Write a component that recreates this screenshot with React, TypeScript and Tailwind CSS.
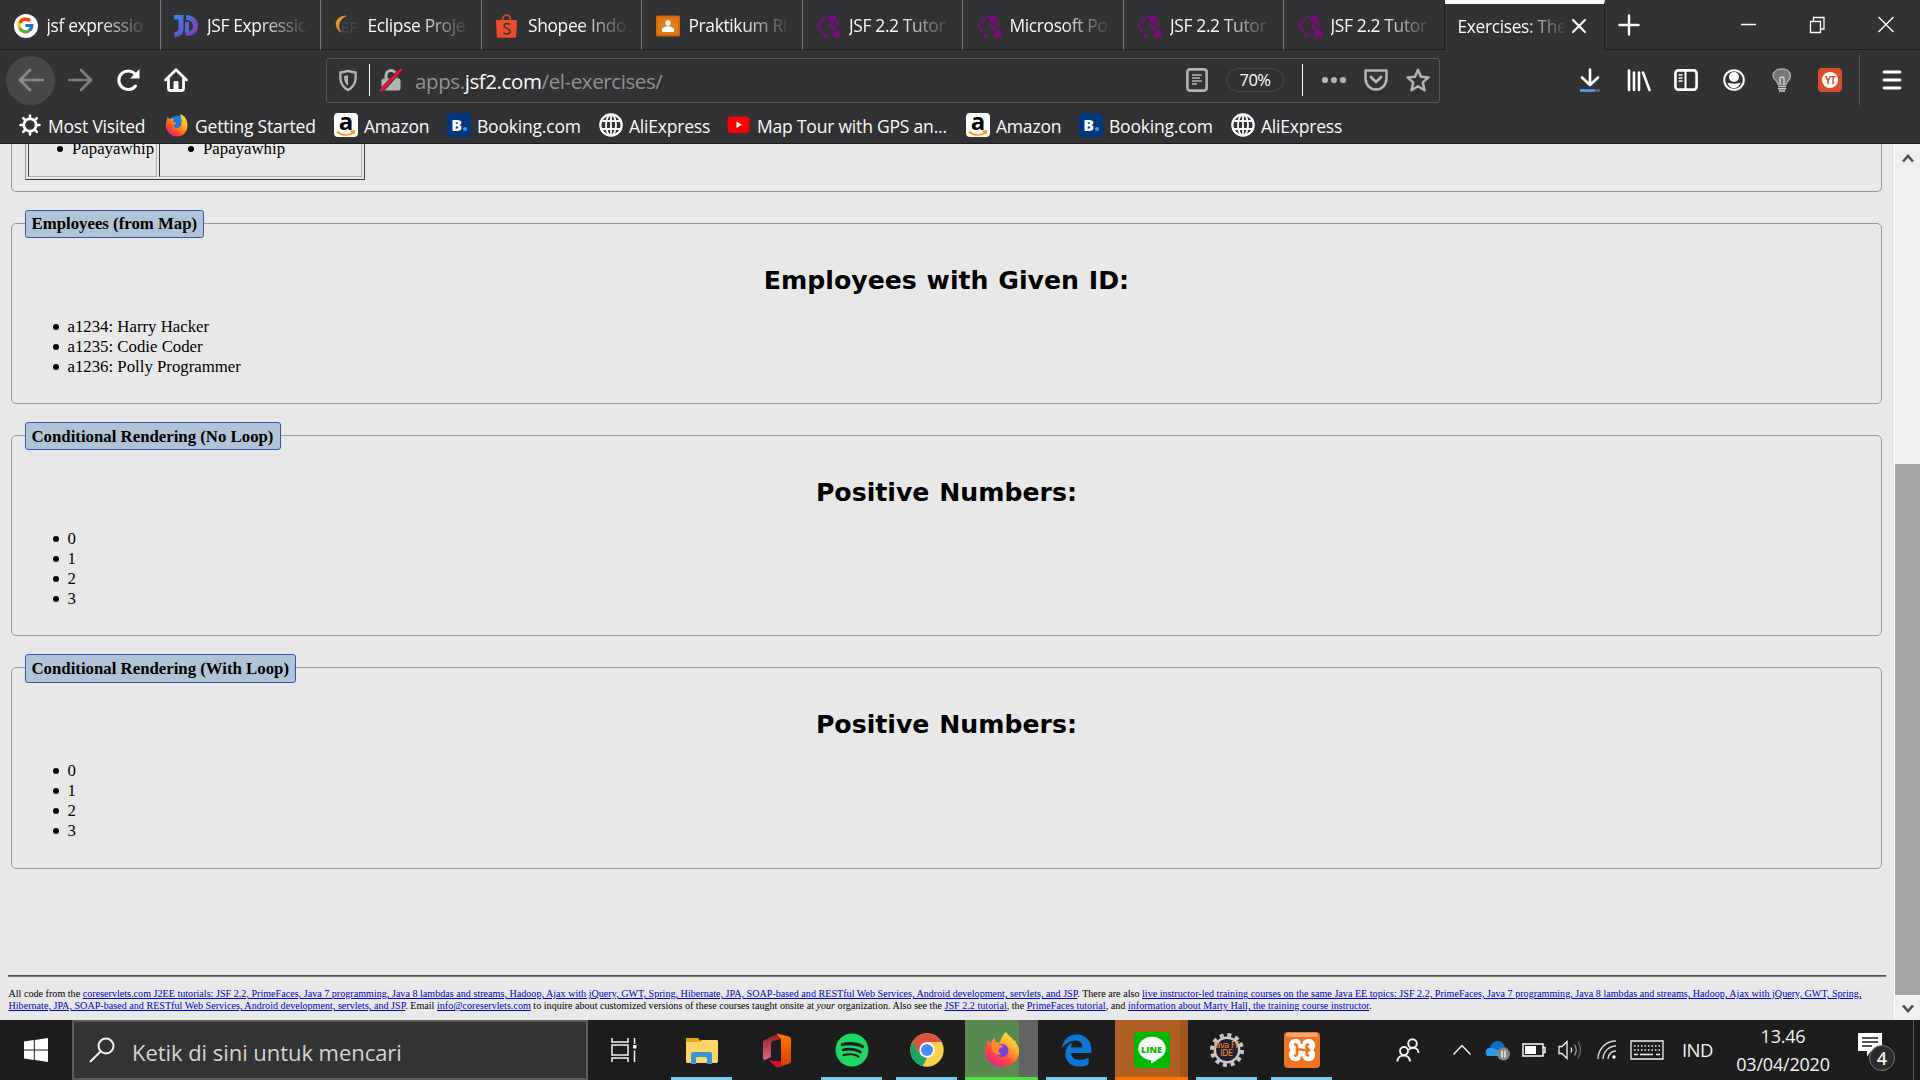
import React from "react";
import { FcGoogle } from "react-icons/fc";
import { FaSpotify, FaEdgeLegacy } from "react-icons/fa";

const UI = "font-['Open_Sans',sans-serif]";

/* ---------- favicons ---------- */

const GoogleIcon = () => (
  <span className="flex size-6 shrink-0 items-center justify-center rounded-full bg-white">
    <FcGoogle className="size-[19px]" />
  </span>
);

const JournalDevIcon = () => (
  <svg viewBox="0 0 24 24" className="size-6 shrink-0">
    <defs>
      <linearGradient id="jd" x1="0" y1="0" x2="1" y2="1">
        <stop offset="0" stopColor="#2f8fe8" />
        <stop offset="0.5" stopColor="#5b5fd0" />
        <stop offset="1" stopColor="#9a2bb0" />
      </linearGradient>
    </defs>
    <path
      fill="url(#jd)"
      d="M0 1h9.500v14c0 5-3.500 8-9 8v-5c3 0 4-1.300 4-3.500V5.500H0zM12 1c7 0 12 4 12 11s-5 10-12 10l-1-4.500c5 0 8-1.500 8-5.500s-3-6-7-6z"
    />
    <path fill="#5064d4" d="M11 8h4v10h-4z" />
  </svg>
);

const EclipseIcon = () => (
  <svg viewBox="0 0 24 24" className="size-6 shrink-0">
    <path d="M11 2C3.500 2 .5 7 1.200 11c.4 3 2 5.500 4.500 7C3 14 2.500 6 11 2z" fill="#e8962a" stroke="#e8962a" strokeWidth="0.600" />
    <path d="M13.500 9H7.500v9h6M7.500 13.500H13M22.500 9h-6v9.500M16.500 13.500h5.500" fill="none" stroke="#47464c" strokeWidth="1.300" />
  </svg>
);

const ShopeeIcon = () => (
  <svg viewBox="0 0 24 24" className="size-6 shrink-0">
    <path d="M7.500 7c0-4 2-6 4-6s4 2 4 6" fill="none" stroke="#ee4d2d" strokeWidth="1.500" />
    <path d="M1 6h21l-.8 16.500q-.2 1.200-1.500 1.200H3.500Q2 23.700 1.900 22.500z" fill="#ee4d2d" />
    <path d="M15 10.500c-2.500-1.800-6-1.300-6 1.300 0 3 6 2.200 6 5.600 0 3-4 3.500-6.500 1.300" fill="none" stroke="#33302f" strokeWidth="1.500" />
  </svg>
);

const ClassroomIcon = () => (
  <svg viewBox="0 0 24 24" className="size-6 shrink-0">
    <rect x="0" y="1.500" width="24" height="21" rx="1.500" fill="#cf6a0c" />
    <rect x="2" y="3.500" width="20" height="17" fill="#de7d15" />
    <circle cx="12" cy="9" r="2.700" fill="#fff" />
    <path d="M6 18v-2c0-5 12-5 12 0v2z" fill="#fff" />
  </svg>
);

const CoreServletsIcon = () => (
  <svg viewBox="0 0 24 24" className="size-6 shrink-0" fill="none" stroke="#7b0c80" strokeWidth="1.800">
    <path d="M14 1.500 8 4 1.200 12 9 22.500l2.500-2.500" />
    <path d="M20 7l2.500 2.500M22.500 9.500l-6 7M13 12.500l4.500 2" />
    <rect x="13" y="1" width="6.500" height="6.500" rx="1.500" fill="#7b0c80" stroke="none" />
    <rect x="17" y="16.500" width="7" height="7" rx="1.200" fill="#7b0c80" stroke="none" />
    <path d="M12.500 14l5-5.500" strokeWidth="2.400" />
  </svg>
);

const GearIcon = () => (
  <svg viewBox="0 0 24 24" className="size-6 shrink-0">
    <g fill="none" stroke="#fff">
      <circle cx="12" cy="12" r="6.200" strokeWidth="2.800" />
      <g strokeWidth="2.600" strokeLinecap="round">
        <path d="M12 5V2.500M12 21.500V19M5 12H2.500M21.500 12H19M7 7 5.200 5.200M17 7l1.800-1.800M7 17l-1.800 1.800M17 17l1.800 1.800" />
      </g>
    </g>
  </svg>
);

const FirefoxOldIcon = () => (
  <svg viewBox="0 0 24 24" className="size-6 shrink-0">
    <defs>
      <linearGradient id="fo" x1="1" y1="0" x2="0.200" y2="1">
        <stop offset="0" stopColor="#fff04a" />
        <stop offset="0.400" stopColor="#ffb01f" />
        <stop offset="0.700" stopColor="#ff5a1f" />
        <stop offset="1" stopColor="#e31587" />
      </linearGradient>
    </defs>
    <circle cx="12" cy="12" r="9.500" fill="#2277e0" />
    <path
      fill="url(#fo)"
      d="M2.500 4 5 6.500C6 5 8 5.500 9 5.500 8 7 8 8 8.500 9l3 .7c-.2 1.500-2.500 1.600-2.800 2.500C9 15 12 16 14.500 14c2-1 2.500-4 1-6.500 1 .3 1.800 1 2 2-.2-3.500-2.500-5-2-8.500 4 1.500 7 6 7 11.500 0 6.500-4.500 11-10.500 11S.8 18.500.8 12.500C.8 9 2 6 2.500 4z"
    />
  </svg>
);

const AmazonIcon = () => (
  <span className="relative flex h-6 w-6 shrink-0 justify-center rounded-[4px] bg-white">
    <span className="-mt-[9px] h-[33px] font-['Open_Sans',sans-serif] text-[24px] leading-[33px] font-bold tracking-normal text-black">a</span>
    <svg viewBox="0 0 24 24" className="absolute inset-0 size-6" fill="none" stroke="#f59b18" strokeWidth="1.700">
      <path d="M3 18.500c5 4.500 12 4.500 16.500 1M16.500 18.300l4-.2-.9 3.300" />
    </svg>
  </span>
);

const BookingIcon = () => (
  <span className="flex size-6 shrink-0 items-center justify-center gap-px rounded-[4px] bg-[#003580] font-['Open_Sans',sans-serif] text-[16px] leading-none font-extrabold text-white">
    <span>B</span>
    <span className="mt-2 size-[4px] rounded-full bg-[#2aa8e8]" />
  </span>
);

const GlobeIcon = () => (
  <svg viewBox="0 0 24 24" className="size-6 shrink-0" fill="none" stroke="#fff" strokeWidth="1.800">
    <circle cx="12" cy="12" r="10.700" strokeWidth="2.200" />
    <ellipse cx="12" cy="12" rx="5" ry="10.500" />
    <path d="M12 1v22M2.500 8h19M2.500 16h19" />
  </svg>
);

const YouTubeIcon = () => (
  <svg viewBox="0 0 24 24" className="size-6 shrink-0">
    <rect x="0.500" y="3.500" width="22" height="16.500" rx="4" fill="#f00" />
    <path d="M9.500 8.500v6.500l5.500-3.200z" fill="#fff" />
  </svg>
);

/* ---------- browser chrome ---------- */

const tabs = [
  { title: "jsf expressio", icon: <GoogleIcon /> },
  { title: "JSF Expressic", icon: <JournalDevIcon /> },
  { title: "Eclipse Proje", icon: <EclipseIcon /> },
  { title: "Shopee Indo", icon: <ShopeeIcon /> },
  { title: "Praktikum RI", icon: <ClassroomIcon /> },
  { title: "JSF 2.2 Tutor", icon: <CoreServletsIcon /> },
  { title: "Microsoft Po", icon: <CoreServletsIcon /> },
  { title: "JSF 2.2 Tutor", icon: <CoreServletsIcon /> },
  { title: "JSF 2.2 Tutor", icon: <CoreServletsIcon /> },
];

const TabBar = () => (
  <div className="flex h-[50px] text-[17.400px] tracking-[-0.350px]">
    {tabs.map((t, i) => (
      <div
        key={i}
        className={
          "flex w-[160.500px] shrink-0 items-center gap-[9px] border-b border-b-[#1e1e1e] pt-[2px] pl-[13.500px] " +
          (i < 8 ? "border-r border-r-[#777]" : "border-r border-r-[#1e1e1e]")
        }
      >
        {t.icon}
        <span className="w-[102px] overflow-hidden whitespace-nowrap [mask-image:linear-gradient(to_right,#000_50%,transparent_100%)]">
          {t.title}
        </span>
      </div>
    ))}
    <div className="flex w-[160px] shrink-0 items-center border-t-4 border-r border-t-[#fafafa] border-r-[#1e1e1e] pl-[13px]">
      <span className="-mt-[2px] w-[107px] overflow-hidden whitespace-nowrap [mask-image:linear-gradient(to_right,#000_62%,transparent_102%)]">
        Exercises: The
      </span>
      <svg viewBox="0 0 16 16" className="-mt-[2px] ml-[6px] size-4" stroke="#fff" strokeWidth="2.200" strokeLinecap="round">
        <path d="M2 2l12 12M14 2 2 14" />
      </svg>
    </div>
    <div className="flex flex-1 items-center border-b border-b-[#1e1e1e] pl-[13px]">
      <svg viewBox="0 0 22 22" className="size-[22px]" stroke="#fff" strokeWidth="2.400" strokeLinecap="round">
        <path d="M11 1.500v19M1.500 11h19" />
      </svg>
      <svg viewBox="0 0 160 20" className="ml-[100px] h-5 w-[160px]" fill="none" stroke="#fff" strokeWidth="1.300">
        <path d="M1 9.500h15M138.500 2l15 15M153.500 2l-15 15" />
        <path d="M70.500 6.500h10v11h-10zM73.500 6V2.500h10.500v11.500H81" />
      </svg>
    </div>
  </div>
);

const Toolbar = () => (
  <div className="flex h-[60px] items-center">
    <div className="ml-[6px] flex size-[49px] items-center justify-center rounded-full bg-[#484848]">
      <svg viewBox="0 0 26 24" className="h-6 w-[26px]" fill="none" stroke="#8b8b8b" strokeWidth="2.600" strokeLinecap="round" strokeLinejoin="round">
        <path d="M12 2 2 12l10 10M2.500 12H25" />
      </svg>
    </div>
    <svg viewBox="0 0 26 24" className="ml-[12px] h-6 w-[26px]" fill="none" stroke="#7d7d7d" strokeWidth="2.600" strokeLinecap="round" strokeLinejoin="round">
      <path d="M14 2l10 10-10 10M23.500 12H2" />
    </svg>
    <svg viewBox="0 0 24 24" className="ml-[23px] size-6" fill="none" stroke="#fff" strokeWidth="3" strokeLinecap="round">
      <path d="M19.500 18A9.300 9.300 0 1 1 19.500 6.500" />
      <path d="M23.500 1v9.500H14z" fill="#fff" stroke="none" />
    </svg>
    <svg viewBox="0 0 24 24" className="ml-[24px] size-6" fill="none" stroke="#fff" strokeWidth="2.800" strokeLinecap="round" strokeLinejoin="round">
      <path d="M1.500 12 12 1.800 22.500 12M4.500 11v9.500q0 2 2 2h11q2 0 2-2V11" />
      <path d="M9.500 22v-8q0-1 1-1h3q1 0 1 1v8z" fill="#fff" stroke="none" />
    </svg>
    <div className="ml-[138px] flex h-[45px] w-[1114px] items-center rounded-[3px] border border-[#575757] pl-[11px]">
      <svg viewBox="0 0 20 24" className="h-[23px] w-5" fill="none" stroke="#b4b4b4" strokeWidth="2.400">
        <path d="M10 2c3 1 5 1.500 8 1.500V9c0 6-3 10-8 13C5 19 2 15 2 9V3.500C5 3.500 7 3 10 2z" strokeLinejoin="round" />
        <path d="M10 6.500v11C7 15 6 12.500 6 9V7.200z" fill="#b4b4b4" stroke="none" />
      </svg>
      <div className="ml-[11px] h-8 w-px bg-white" />
      <svg viewBox="0 0 22 24" className="ml-[10px] h-6 w-[22px]" fill="none">
        <path d="M6 11V7.500a5 5 0 0 1 10 0V11" stroke="#b4b4b4" strokeWidth="3" />
        <rect x="1.500" y="10.500" width="19" height="12" rx="2" fill="#b4b4b4" />
        <path d="M0 24 22.500 0" stroke="#323234" strokeWidth="4.500" />
        <path d="M1.500 22 20.500 2" stroke="#f5103f" strokeWidth="2.800" strokeLinecap="round" />
      </svg>
      <span className="ml-[13px] w-[260px] pt-[2px] text-[20.500px] leading-none tracking-[-0.400px] whitespace-nowrap text-[#929292]">
        apps.<span className="text-[#f9f9fa]">jsf2.com</span>/el-exercises/
      </span>
      <div className="ml-auto flex items-center">
        <svg viewBox="0 0 22 24" className="h-6 w-[22px]" fill="none" stroke="#b4b4b4">
          <rect x="1.400" y="1.400" width="19.200" height="21.200" rx="2.500" strokeWidth="2.600" />
          <path d="M6 7h10M6 10h8M6 13h10M6 16h5" strokeWidth="1.400" />
        </svg>
        <span className="ml-[18px] flex h-[24px] w-[58px] items-center justify-center rounded-full border border-[#474747] text-[16.500px] tracking-[-0.500px] text-white">
          70%
        </span>
        <div className="ml-[18px] h-8 w-px bg-white" />
        <svg viewBox="0 0 26 8" className="ml-[18px] h-2 w-[26px]" fill="#b4b4b4">
          <circle cx="4" cy="4" r="3.100" />
          <circle cx="13" cy="4" r="3.100" />
          <circle cx="22" cy="4" r="3.100" />
        </svg>
        <svg viewBox="0 0 24 24" className="ml-[17px] size-6" fill="none" stroke="#b4b4b4" strokeWidth="2.500" strokeLinecap="round" strokeLinejoin="round">
          <path d="M1.500 2.500h21V10c0 7-4.500 11.500-10.500 11.500S1.500 17 1.500 10z" />
          <path d="m7 9 5 5 5-5" strokeWidth="2.800" />
        </svg>
        <svg viewBox="0 0 24 24" className="mr-[9px] ml-[18px] size-6" fill="none" stroke="#b4b4b4" strokeWidth="2.500" strokeLinejoin="round">
          <path d="m12 1.800 3 6.900 7.500.7-5.700 5 1.700 7.800L12 18.200l-6.500 4 1.700-7.800-5.700-5 7.500-.7z" />
        </svg>
      </div>
    </div>
    <svg viewBox="0 0 22 24" className="ml-[139px] h-6 w-[22px]" fill="none" stroke="#fff" strokeWidth="2.600" strokeLinecap="round" strokeLinejoin="round">
      <path d="M11 1.500v15M3 9.500l8 7.500 8-7.500" />
      <path d="M1 22.500h15" stroke="#45a1ff" strokeLinecap="butt" />
      <path d="M16 22.500h5" stroke="#5c6066" strokeLinecap="butt" />
    </svg>
    <svg viewBox="0 0 24 24" className="ml-[26px] size-6" fill="none" stroke="#fff" strokeWidth="2.600" strokeLinecap="round">
      <path d="M2 2.500v19.500M7 4.500v17.500M12 4.500v17.500M16 4.500l6.500 17.500" />
    </svg>
    <svg viewBox="0 0 24 24" className="ml-[23px] size-6" fill="none" stroke="#fff" strokeWidth="2.600">
      <rect x="1.400" y="2.400" width="21.200" height="19.200" rx="3" />
      <path d="M11.500 2v20" strokeWidth="2" />
      <path d="M4.500 7h4M4.500 10h4M4.500 13h4" strokeWidth="1.500" />
    </svg>
    <svg viewBox="0 0 24 24" className="ml-[24px] size-6">
      <circle cx="12" cy="12" r="9.800" fill="none" stroke="#fff" strokeWidth="2" />
      <circle cx="12" cy="9" r="5" fill="#fff" />
      <path d="M5.500 14.500c2 1.500 11 1.500 13 0-1 4-3.500 5.500-6.500 5.500s-5.500-1.500-6.500-5.500z" fill="#fff" />
    </svg>
    <svg viewBox="0 0 24 24" className="ml-[24px] size-6" fill="#777" stroke="#b4b4b4" strokeWidth="1.200">
      <path d="M8 16.500c0-3-5-4.500-5-9C3 3.500 7 .8 12 .8s8.500 3 8.500 7c0 4.500-4.500 6-4.500 9z" />
      <path d="M10 17v-7q2-2 4 0v7" fill="none" stroke="#ddd" />
      <path d="M8 18.500h8M8 20.800h8M9 23h6" stroke="#ccc" strokeWidth="1.600" />
    </svg>
    <div className="ml-[24px] flex size-6 items-center justify-center rounded-[4px] bg-[#d9512c]">
      <span className="flex size-4 items-center justify-center rounded-full bg-white text-[10px] leading-none font-bold tracking-[-1px] text-[#d9512c]">YT</span>
    </div>
    <div className="ml-[17px] h-[50px] w-px bg-[#5a5a5a]" />
    <svg viewBox="0 0 20 20" className="ml-[22px] h-5 w-5" stroke="#fff" strokeWidth="2.800" strokeLinecap="round">
      <path d="M2 2h16M2 10h16M2 18h16" />
    </svg>
  </div>
);

const Bookmarks = () => {
  const items = [
    { label: "Most Visited", icon: <GearIcon />, w: "w-[147px]" },
    { label: "Getting Started", icon: <FirefoxOldIcon />, w: "w-[169px]" },
    { label: "Amazon", icon: <AmazonIcon />, w: "w-[113px]" },
    { label: "Booking.com", icon: <BookingIcon />, w: "w-[152px]" },
    { label: "AliExpress", icon: <GlobeIcon />, w: "w-[128px]" },
    { label: "Map Tour with GPS an...", icon: <YouTubeIcon />, w: "w-[239px]" },
    { label: "Amazon", icon: <AmazonIcon />, w: "w-[113px]" },
    { label: "Booking.com", icon: <BookingIcon />, w: "w-[152px]" },
    { label: "AliExpress", icon: <GlobeIcon />, w: "w-[128px]" },
  ];
  return (
    <div className="flex h-[34px] items-center border-b border-[#1c1c1c] pb-[3px] pl-[18px] text-[17.500px] tracking-[-0.200px]">
      {items.map((b, i) => (
        <div key={i} className={"flex shrink-0 items-center gap-[6px] whitespace-nowrap " + b.w}>
          {b.icon}
          <span className="pt-[2px] leading-6">{b.label}</span>
        </div>
      ))}
    </div>
  );
};

/* ---------- page ---------- */

const Section = ({ legend, legendW, title, items, box }: { legend: string; legendW: string; title: string; items: string[]; box: string }) => (
  <fieldset className={"mr-[12px] mb-[18px] ml-[11px] rounded-[5px] border border-[#979797] px-[13px] " + box}>
    <legend className="h-[27px]">
      <span
        className={
          "flex items-center rounded-[3px] border border-[#2a58ae] bg-[#b0c4d8] pl-[5.500px] text-[16.800px] leading-none font-bold whitespace-nowrap " +
          legendW
        }
      >
        {legend}
      </span>
    </legend>
    <h2 className="mt-[29px] text-center font-['DejaVu_Sans',sans-serif] text-[25.200px] leading-[30px] font-bold [word-spacing:1px]">{title}</h2>
    <ul className="mt-[20.500px] list-none pl-[24.500px]">
      {items.map((x) => (
        <li key={x} className="flex h-5 items-center text-[16.800px] leading-5">
          <span className="mr-[9px] ml-[3px] size-[6px] rounded-full bg-black" />
          {x}
        </li>
      ))}
    </ul>
  </fieldset>
);

const A = ({ children }: { children: React.ReactNode }) => <a className="text-[#0000c4] underline">{children}</a>;

const ColorCell = ({ box }: { box: string }) => (
  <div className={"h-[33px] border border-t-0 border-r-[#b4b4b4] border-b-[#b4b4b4] border-l-[#3c3c3c] " + box}>
    <div className="-mt-[5px] flex h-5 items-center text-[16.800px] leading-5">
      <span className="mr-[9px] size-[6px] rounded-full bg-black" />
      Papayawhip
    </div>
  </div>
);

const Page = () => (
  <div className="flex h-[876px] bg-[#e8e8e8]">
    <div className="w-[1894px] overflow-hidden font-['Liberation_Serif',serif] text-black">
      <div className="mr-[12px] mb-[18px] ml-[11px] h-[48px] rounded-b-[5px] border border-t-0 border-[#979797] pl-[13px]">
        <div className="flex h-[36px] w-[340px] gap-[2px] border border-t-0 border-r-[#3c3c3c] border-b-[#3c3c3c] border-l-[#999] pl-[2px]">
          <ColorCell box="w-[129px] pl-[28px]" />
          <ColorCell box="w-[203px] pl-[28px]" />
        </div>
      </div>
      <Section
        legend="Employees (from Map)"
        legendW="h-7 w-[179px]"
        title="Employees with Given ID:"
        items={["a1234: Harry Hacker", "a1235: Codie Coder", "a1236: Polly Programmer"]}
        box="h-[194px]"
      />
      <Section legend="Conditional Rendering (No Loop)" legendW="h-7 w-[256px] pt-[2px]" title="Positive Numbers:" items={["0", "1", "2", "3"]} box="h-[214px]" />
      <Section
        legend="Conditional Rendering (With Loop)"
        legendW="h-[29px] w-[271px] pt-px"
        title="Positive Numbers:"
        items={["0", "1", "2", "3"]}
        box="h-[215px]"
      />
      <div className="mt-[106px] mr-[8px] ml-[8px] h-[2px] border-t border-b border-t-[#4c4f4c] border-b-[#777a77]" />
      <p className="mt-[11px] ml-[8.500px] text-[10.080px] leading-[12px] tracking-[0.018px] whitespace-nowrap">
        All code from the{" "}
        <A>
          coreservlets.com J2EE tutorials: JSF 2.2, PrimeFaces, Java 7 programming, Java 8 lambdas and streams, Hadoop, Ajax with jQuery, GWT, Spring,
          Hibernate, JPA, SOAP-based and RESTful Web Services, Android development, servlets, and JSP
        </A>
        . There are also{" "}
        <A>
          live instructor-led training courses on the same Java EE topics: JSF 2.2, PrimeFaces, Java 7 programming, Java 8 lambdas and streams, Hadoop,
          Ajax with jQuery, GWT, Spring,
          <br />
          Hibernate, JPA, SOAP-based and RESTful Web Services, Android development, servlets, and JSP
        </A>
        . Email <A>info@coreservlets.com</A> to inquire about customized versions of these courses taught onsite at <i>your</i> organization. Also see
        the <A>JSF 2.2 tutorial</A>, the <A>PrimeFaces tutorial</A>, and <A>information about Marty Hall, the training course instructor</A>.
      </p>
    </div>
    <div className="flex flex-1 flex-col items-center border-l border-white bg-[#f0f0f0]">
      <svg viewBox="0 0 12 10" className="mt-[9px] h-[10px] w-3" fill="none" stroke="#505050" strokeWidth="2.600">
        <path d="M1 8.500 6 3l5 5.500" />
      </svg>
      <div className="mt-[301px] h-[531px] w-full bg-[#a6a6a6]" />
      <svg viewBox="0 0 12 10" className="mt-[9px] h-[10px] w-3" fill="none" stroke="#505050" strokeWidth="2.600">
        <path d="M1 1.500 6 7l5-5.500" />
      </svg>
    </div>
  </div>
);

/* ---------- taskbar ---------- */

const ExplorerIcon = () => (
  <svg viewBox="0 0 36 36" className="size-9">
    <path d="M2 6h12l2 2.500h16.500q1 0 1 1V13H2z" fill="#e8a914" />
    <path d="M2 10h14l2-2h14.500q1.500 0 1.500 1v20q0 2-1.500 2H3.500Q2 31 2 29.500z" fill="#fcd667" />
    <path d="M7 32V22q0-2 2-2h17q2 0 2 2v10h-5v-5.500q0-1.500-1.500-1.500h-8q-1.500 0-1.500 1.500V32z" fill="#3a94d6" />
  </svg>
);
const OfficeIcon = () => (
  <svg viewBox="0 0 36 36" className="size-9">
    <defs>
      <linearGradient id="of" x1="0" y1="0" x2="0" y2="1">
        <stop offset="0" stopColor="#a01818" />
        <stop offset="1" stopColor="#d46a8a" />
      </linearGradient>
      <linearGradient id="og" x1="0" y1="0" x2="0" y2="1">
        <stop offset="0" stopColor="#ff7a00" />
        <stop offset="1" stopColor="#d83b01" />
      </linearGradient>
    </defs>
    <path d="M4 9 20 1v7l-8 3v14l-6 3q-2 0-2-2z" fill="url(#of)" />
    <path d="M11 28.500 22 30V8L18 1.500l12 3q2 .5 2 2.500v22q0 2-2 2.700L20 35q-2 .5-4-.7z" fill="url(#og)" />
    <path d="M10 29h12v6l-3 .2z" fill="#d01030" />
    <path d="M13 9l9-1.500V29l-9-1z" fill="#1d1d1d" />
  </svg>
);
const ChromeIcon = () => (
  <svg viewBox="0 0 36 36" className="size-9">
    <circle cx="18" cy="18" r="16.700" fill="#fcd04b" />
    <path d="M3.500 9.700A16.700 16.700 0 0 1 32.500 9.900H18L10.500 22z" fill="#dd5144" />
    <path d="M3.500 9.700 11 22l7 4-4.500 8.200A16.700 16.700 0 0 1 3.500 9.700z" fill="#1da362" />
    <circle cx="18" cy="18" r="7.700" fill="#fff" />
    <circle cx="18" cy="18" r="6" fill="#4c8bf5" />
  </svg>
);
const FirefoxIcon = () => (
  <svg viewBox="0 0 36 36" className="size-9">
    <defs>
      <linearGradient id="ff" x1="0.900" y1="0" x2="0.200" y2="1">
        <stop offset="0" stopColor="#fff44f" />
        <stop offset="0.350" stopColor="#ffb02e" />
        <stop offset="0.650" stopColor="#ff4f3f" />
        <stop offset="1" stopColor="#e01a90" />
      </linearGradient>
    </defs>
    <path
      fill="url(#ff)"
      d="M22 0c1 3 6 5 8 9 2-1 2 1 1.500 2C35 14 35 17 35 20c0 8-7 15-16.500 15S1 28 1 18.500c0-3 1-5 2-6.500l.5-4L7 11c1-3 2-4 3.500-5l1 4c2 0 3 0 4 1 2-5 3-8 6.500-11z"
    />
    <circle cx="18" cy="18.500" r="6.500" fill="#7a3fd6" />
    <path d="M7 11c4-1 6 0 8 2l4 .5c0 2-3 2.500-4 3.500-1 3 1 5 3 5-4 2-10-1-10-6z" fill="#ff8a2c" />
  </svg>
);
const LineIcon = () => (
  <span className="relative flex size-9 items-center justify-center rounded-[4px] bg-[#00b900]">
    <svg viewBox="0 0 36 36" className="absolute size-9" fill="#fff">
      <ellipse cx="18" cy="16.500" rx="13.700" ry="11.700" />
      <path d="M17 26v5.500c5-2 9-6 12-10z" />
    </svg>
    <span className="relative -mt-[2px] font-['Open_Sans',sans-serif] text-[9px] leading-none font-extrabold text-[#00b900]">LINE</span>
  </span>
);
const JavaFFIcon = () => (
  <span className="relative flex size-9 items-center justify-center">
    <svg viewBox="0 0 36 36" className="absolute size-9">
      <circle cx="18" cy="18" r="15" fill="none" stroke="#c8c8c8" strokeWidth="4" strokeDasharray="4 3.850" />
      <circle cx="18" cy="18" r="12.200" fill="#26202e" stroke="#c8c8c8" strokeWidth="2.500" />
    </svg>
    <span className="relative text-center font-['DejaVu_Sans',sans-serif] text-[8px] leading-[8px] tracking-[-0.400px] whitespace-nowrap text-[#f09030]">
      Java FF
      <br />
      IDE
    </span>
  </span>
);
const XamppIcon = () => (
  <svg viewBox="0 0 36 36" className="size-9">
    <rect width="36" height="36" rx="4" fill="#f07420" />
    <rect x="2" y="1" width="32" height="4" rx="2" fill="#f6a878" />
    <g fill="#fff">
      <circle cx="11.500" cy="13.500" r="6.700" />
      <circle cx="24.500" cy="13.500" r="6.700" />
      <circle cx="11.500" cy="22.500" r="6.700" />
      <circle cx="24.500" cy="22.500" r="6.700" />
      <rect x="9" y="12" width="18" height="12" />
    </g>
    <g fill="none" stroke="#f07420" strokeWidth="2.600" strokeLinecap="round" strokeLinejoin="round">
      <path d="M11 12.500a1.500 1.500 0 0 1 2 1.500v3.500h4.500M13 18v4.500a1.500 1.500 0 0 1-2 1M19 18h3.500M24 12.500q-2 1-1.500 3l2.500 2.500-2.500 2.500q-.5 2 1.500 3" />
      <path d="M17.500 8v3M17.500 25.500v3" strokeWidth="2" />
    </g>
  </svg>
);

const apps = [
  { icon: <ExplorerIcon />, cell: "", bar: "bg-[#76cdf2] w-[61px]" },
  { icon: <OfficeIcon />, cell: "", bar: "w-0" },
  {
    icon: (
      <span className="flex size-9 items-center justify-center">
        <FaSpotify className="size-[34px] shrink-0 text-[#1ed760]" />
      </span>
    ),
    cell: "",
    bar: "bg-[#76cdf2] w-[61px]",
  },
  { icon: <ChromeIcon />, cell: "", bar: "bg-[#76cdf2] w-[61px]" },
  { icon: <FirefoxIcon />, cell: "bg-[linear-gradient(to_right,#5a8a52_54px,#636363_54px)]", bar: "bg-[#4be33c] w-[73px]" },
  { icon: <FaEdgeLegacy className="size-[33px] text-[#0a78d6]" />, cell: "", bar: "bg-[#76cdf2] w-[61px]" },
  { icon: <LineIcon />, cell: "bg-[linear-gradient(to_right,#b06024_65px,#a15518_65px)]", bar: "bg-[#ff7200] w-[73px]" },
  { icon: <JavaFFIcon />, cell: "", bar: "bg-[#76cdf2] w-[61px]" },
  { icon: <XamppIcon />, cell: "", bar: "bg-[#76cdf2] w-[61px]" },
];

const Taskbar = () => (
  <div className="flex h-[60px] items-center bg-[#1d1d1d] text-[#f2f2f2]">
    <svg viewBox="0 0 24 24" className="ml-6 size-6" fill="#fff">
      <path d="M0 3.400 9.800 2v9.500H0zM10.800 1.900 24 0v11.500H10.800zM0 12.500h9.800V22L0 20.600zM10.800 12.500H24V24l-13.200-1.900z" />
    </svg>
    <div className="ml-6 flex h-[60px] w-[516px] items-center border-2 border-[#5b5b5b] bg-[#333]">
      <svg viewBox="0 0 26 26" className="ml-[15px] size-[26px]" fill="none" stroke="#f2f2f2" strokeWidth="2">
        <circle cx="17" cy="9" r="7.500" />
        <path d="M11.500 14.500 1 25" />
      </svg>
      <span className="ml-[17px] pt-[3px] text-[22px] leading-none tracking-[-0.050px] whitespace-nowrap text-[#d4d4d4]">Ketik di sini untuk mencari</span>
    </div>
    <svg viewBox="0 0 26 24" className="ml-[23px] h-6 w-[26px]" fill="none" stroke="#f2f2f2" strokeWidth="1.500">
      <path d="M1 0v4h16V0M1 24v-4h16v4M1 7h16v10H1zM23.500 0v6M23.500 12.500V24" />
      <path d="M22 7h3.500v3.500H22z" fill="#f2f2f2" stroke="none" />
    </svg>
    <div className="ml-[28px] flex gap-[2px]">
      {apps.map((a, i) => (
        <div key={i} className={"relative flex h-[60px] w-[73px] items-center justify-center " + a.cell}>
          {a.icon}
          <div className={"absolute bottom-0 h-[3px] " + a.bar} />
        </div>
      ))}
    </div>
    <svg viewBox="0 0 24 24" className="ml-[58px] size-[24px]" fill="none" stroke="#f2f2f2" strokeWidth="1.900">
      <circle cx="16.500" cy="5.500" r="4.300" />
      <circle cx="8" cy="13" r="4" />
      <path d="M1.500 23.500c0-8 12.500-8 12.500 0M12.500 12c3-3.500 9.500-3 10 3" />
    </svg>
    <svg viewBox="0 0 20 12" className="ml-[32px] h-3 w-5" fill="none" stroke="#f2f2f2" strokeWidth="1.500">
      <path d="m1.500 10.500 8.500-9 8.500 9" />
    </svg>
    <svg viewBox="0 0 26 22" className="ml-[13px] h-[22px] w-[26px]">
      <path d="M2 16.500C-1 13 1.500 9 5 8.500 7 2 14 0 18 4.500c1 1 1.500 2 1.500 3 4 1 4.500 5 3.500 9z" fill="#0f6cbd" />
      <path d="M2 17c-3-4 0-8.500 4-8 4 0 6 2 9 3l8 5z" fill="#2a9be8" />
      <circle cx="18.500" cy="15" r="6.500" fill="#858585" />
      <path d="M17 11.500v7M20 11.500v7" stroke="#fff" strokeWidth="1.300" />
    </svg>
    <svg viewBox="0 0 24 16" className="ml-[11px] h-4 w-6" fill="none" stroke="#fff" strokeWidth="1.400">
      <path d="M1 2h20v12H1zM21.500 5.500h1.500v5h-1.500" />
      <path d="M3 4h11v8H3z" fill="#fff" stroke="none" />
    </svg>
    <svg viewBox="0 0 24 20" className="ml-[12px] h-5 w-6" fill="none" stroke="#f2f2f2" strokeWidth="1.300">
      <path d="M1 6.500h3L9 1.500v17l-5-5H1z" />
      <path d="M13 7.500q1.500 2.500 0 5" />
      <path d="M16.500 4.500q3.500 5.500 0 11" stroke="#9a9a9a" />
      <path d="M20 1.500q5 8.500 0 17" stroke="#6a6a6a" />
    </svg>
    <svg viewBox="0 0 20 20" className="ml-[15px] size-5" fill="none" stroke="#d8d8d8" strokeWidth="1.400">
      <path d="M1 19C1 9 9 1 19 1M6 19C6 12 12 6 19 6M11 19c0-5 4-8 8-8" />
      <circle cx="17" cy="17" r="1.700" fill="#fff" stroke="none" />
    </svg>
    <svg viewBox="0 0 34 20" className="ml-[13px] h-5 w-[34px]" fill="none" stroke="#f2f2f2" strokeWidth="1.300">
      <path d="M1 1h32v18H1z" />
      <path d="M4 6h27M4 10h27" strokeDasharray="1.500 2" />
      <path d="M4 14.500h4M10 14.500h13M26 14.500h4" />
    </svg>
    <span className="ml-[18px] w-[31px] text-[18.500px] leading-none tracking-[-0.600px]">IND</span>
    <div className="ml-[18px] flex w-[104px] flex-col items-center text-[18px] leading-7 tracking-[-0.200px] whitespace-nowrap">
      <span>13.46</span>
      <span>03/04/2020</span>
    </div>
    <div className="relative ml-[23px] h-[44px] w-[38px]">
      <svg viewBox="0 0 24 26" className="absolute top-[5px] left-0 h-[26px] w-6" fill="#fff">
        <path d="M0 0h24v18H13l-4 5.500V18H0z" />
        <path d="M4 5h16M4 9h16M4 13h10" stroke="#1d1d1d" strokeWidth="1.400" />
      </svg>
      <span className="absolute top-[17px] left-[11px] flex size-[26px] items-center justify-center rounded-full border border-[#777] bg-[#2b2b2b] text-[18px] leading-none font-semibold">
        4
      </span>
    </div>
    <div className="mr-[6px] ml-auto h-[60px] w-px bg-[#5a5a5a]" />
  </div>
);

export default function App() {
  return (
    <div className={"flex h-[1080px] w-[1920px] flex-col overflow-hidden bg-[#323234] text-[#f9f9fa] " + UI}>
      <TabBar />
      <Toolbar />
      <Bookmarks />
      <Page />
      <Taskbar />
    </div>
  );
}
